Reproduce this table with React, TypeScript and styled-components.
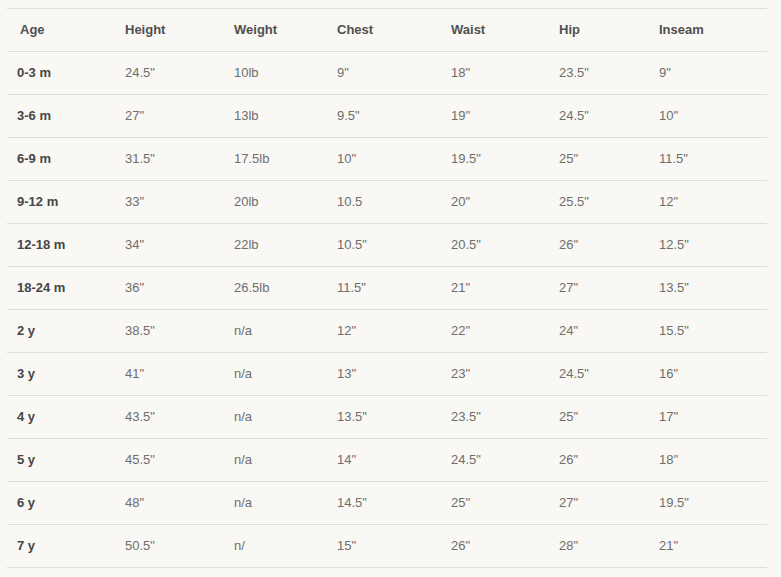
import React from "react";
import styled, { createGlobalStyle } from "styled-components";

const Global = createGlobalStyle`
  html, body { margin: 0; padding: 0; background: #f9f8f4; }
  body { font-family: "Liberation Sans", Arial, sans-serif; }
`;

const Page = styled.div`
  padding: 8px 14px 0 7px;
  width: 760px;
`;

const Table = styled.div`
  display: flex;
  flex-direction: column;
  border-top: 1px solid #dedcd7;
`;

const Row = styled.div`
  display: grid;
  grid-template-columns: 108px 109px 103px 114px 108px 100px 118px;
  height: 42px;
  align-items: center;
  border-bottom: 1px solid #dedcd7;
`;

const Cell = styled.div<{ $head?: boolean; $label?: boolean }>`
  padding-left: ${(p) => (p.$head && p.$label ? 13 : 10)}px;
  margin-bottom: 2px;
  font-size: 13px;
  font-weight: ${(p) => (p.$head || p.$label ? 700 : 400)};
  color: ${(p) => (p.$head ? "#505050" : p.$label ? "#464646" : "#6e6e6e")};
  white-space: nowrap;
`;

const headers = ["Age", "Height", "Weight", "Chest", "Waist", "Hip", "Inseam"];
const rows: string[][] = [
  ["0-3 m", '24.5"', "10lb", '9"', '18"', '23.5"', '9"'],
  ["3-6 m", '27"', "13lb", '9.5"', '19"', '24.5"', '10"'],
  ["6-9 m", '31.5"', "17.5lb", '10"', '19.5"', '25"', '11.5"'],
  ["9-12 m", '33"', "20lb", "10.5", '20"', '25.5"', '12"'],
  ["12-18 m", '34"', "22lb", '10.5"', '20.5"', '26"', '12.5"'],
  ["18-24 m", '36"', "26.5lb", '11.5"', '21"', '27"', '13.5"'],
  ["2 y", '38.5"', "n/a", '12"', '22"', '24"', '15.5"'],
  ["3 y", '41"', "n/a", '13"', '23"', '24.5"', '16"'],
  ["4 y", '43.5"', "n/a", '13.5"', '23.5"', '25"', '17"'],
  ["5 y", '45.5"', "n/a", '14"', '24.5"', '26"', '18"'],
  ["6 y", '48"', "n/a", '14.5"', '25"', '27"', '19.5"'],
  ["7 y", '50.5"', "n/", '15"', '26"', '28"', '21"'],
];

export default function App() {
  return (
    <>
      <Global />
      <Page>
        <Table>
          <Row>
            {headers.map((h, i) => (
              <Cell key={h} $head $label={i === 0}>
                {h}
              </Cell>
            ))}
          </Row>
          {rows.map((r) => (
            <Row key={r[0]}>
              {r.map((c, i) => (
                <Cell key={i} $label={i === 0}>
                  {c}
                </Cell>
              ))}
            </Row>
          ))}
        </Table>
      </Page>
    </>
  );
}
